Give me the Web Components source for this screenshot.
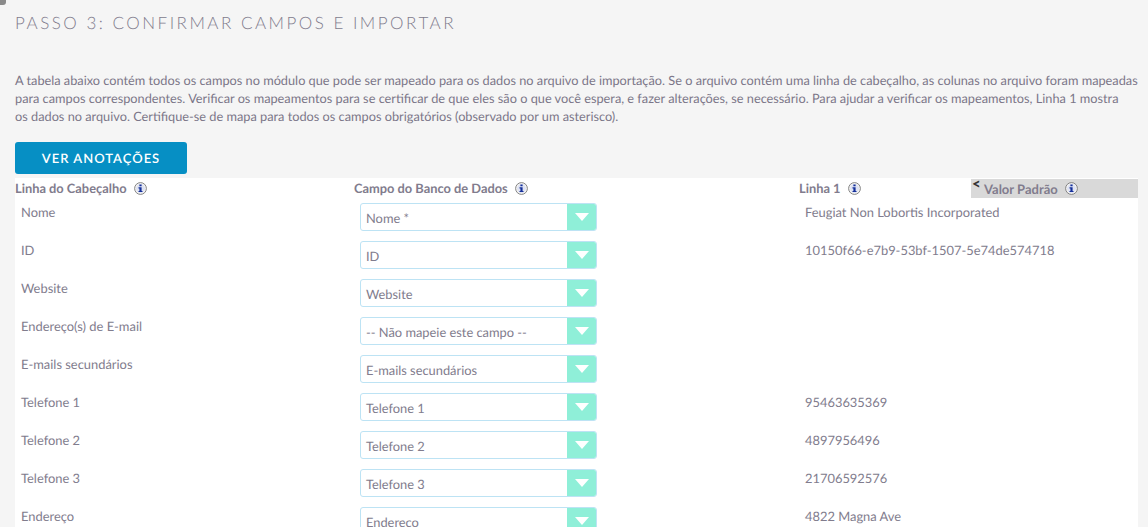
<!DOCTYPE html>
<html lang="pt">
<head>
<meta charset="utf-8">
<title>Passo 3</title>
<style>
  html, body { margin: 0; height: 527px; overflow: hidden; background: #f5f5f5; }
  body { font-family: Lato, sans-serif; color: #817c8d; text-rendering: geometricPrecision; }
</style>
</head>
<body>
<import-step>
  <span slot="title">Passo 3: Confirmar campos e importar</span>
  A tabela abaixo contém todos os campos no módulo que pode ser mapeado para os dados no arquivo de importação. Se o arquivo contém uma linha de cabeçalho, as colunas no arquivo foram mapeadas para campos correspondentes. Verificar os mapeamentos para se certificar de que eles são o que você espera, e fazer alterações, se necessário. Para ajudar a verificar os mapeamentos, Linha 1 mostra<br>os dados no arquivo. Certifique-se de mapa para todos os campos obrigatórios (observado por um asterisco).
  <map-table slot="table">
    <map-row label="Nome" field="Nome *" value="Feugiat Non Lobortis Incorporated"></map-row>
    <map-row label="ID" field="ID" value="10150f66-e7b9-53bf-1507-5e74de574718"></map-row>
    <map-row label="Website" field="Website"></map-row>
    <map-row label="Endereço(s) de E-mail" field="-- Não mapeie este campo --"></map-row>
    <map-row label="E-mails secundários" field="E-mails secundários"></map-row>
    <map-row label="Telefone 1" field="Telefone 1" value="95463635369"></map-row>
    <map-row label="Telefone 2" field="Telefone 2" value="4897956496"></map-row>
    <map-row label="Telefone 3" field="Telefone 3" value="21706592576"></map-row>
    <map-row label="Endereço" field="Endereco" value="4822 Magna Ave"></map-row>
  </map-table>
</import-step>

<script>
const INFO_ICON = `<svg width="13" height="13" viewBox="0 0 13 13" aria-hidden="true">
  <circle cx="6.5" cy="6.5" r="5.9" fill="#f4f4f4" stroke="#777" stroke-width=".9"/>
  <circle cx="6.5" cy="6.5" r="4.4" fill="#dfe3f3"/>
  <path d="M5.4 2.6h2.2v1.7H5.4zM4.5 5.3h3.1v3.6h.9v1.2h-4V8.9h.9V6.5h-.9z" fill="#15309a"/>
</svg>`;

class InfoIcon extends HTMLElement {
  constructor() {
    super();
    this.attachShadow({ mode: "open" }).innerHTML = `
      <style>
        :host { display: inline-flex; width: 13px; height: 13px; }
      </style>
      ${INFO_ICON}`;
  }
}

class ImportStep extends HTMLElement {
  constructor() {
    super();
    this.attachShadow({ mode: "open" }).innerHTML = `
      <style>
        :host { display: block; position: relative; padding: 0 0 0 15px; }
        .corner {
          position: absolute; left: -3px; top: -3px; width: 9px; height: 8px;
          background: #8a8a8a; border-radius: 0 0 3px 0;
        }
        h2 {
          margin: 0; padding-top: 13px; height: 25px; line-height: 20px;
          font-size: 17px; font-weight: 300; letter-spacing: 2.5px;
          text-transform: uppercase; color: #817c8d; white-space: nowrap;
        }
        p {
          margin: 33px 0 0; font-size: 12.76px; line-height: 18px;
          width: 1130px; color: #7b7688;
        }
        button {
          display: block; margin: 17px 0 4px; width: 172px; height: 32px; padding: 0;
          border: 0; border-radius: 3px; background: #068fc4; color: #fff;
          font: 600 13px Lato, sans-serif; letter-spacing: 1px; text-transform: uppercase;
          text-rendering: geometricPrecision;
        }
      </style>
      <div class="corner"></div>
      <h2><slot name="title"></slot></h2>
      <p><slot></slot></p>
      <button type="button">Ver anotações</button>
      <slot name="table"></slot>`;
  }
}

class MapTable extends HTMLElement {
  constructor() {
    super();
    this.attachShadow({ mode: "open" }).innerHTML = `
      <style>
        :host { display: block; width: 1123px; background: #fff; font-size: 12.9px; }
        .head {
          display: grid; grid-template-columns: 339px 445px 172px 1fr;
          height: 20px; align-items: center; font-weight: 700; font-size: 12.85px; color: #817c8d;
        }
        .head span { display: flex; align-items: center; gap: 7px; white-space: nowrap; }
        .default {
          height: 19px; margin-top: 1px; background: #d9d9d9; position: relative;
          padding-left: 13px; font-size: 13px;
        }
        .default i {
          position: absolute; left: 1px; top: -2px; font-style: normal; font-weight: 900;
          font-size: 15px; line-height: 14px; color: #333;
        }
      </style>
      <div class="head">
        <span>Linha do Cabeçalho <info-icon></info-icon></span>
        <span>Campo do Banco de Dados <info-icon></info-icon></span>
        <span>Linha 1 <info-icon></info-icon></span>
        <span class="default"><i>&lt;</i>Valor Padrão <info-icon></info-icon></span>
      </div>
      <slot></slot>`;
  }
}

class MapRow extends HTMLElement {
  constructor() {
    super();
    this.attachShadow({ mode: "open" }).innerHTML = `
      <style>
        :host {
          display: grid; grid-template-columns: 345px 445px 1fr;
          height: 38px; color: #817c8d;
        }
        .label { padding: 5px 0 0 6px; line-height: 18px; }
        .value { padding: 5px 0 0 0; line-height: 18px; }
        .select {
          box-sizing: border-box; width: 237px; height: 28px; margin-top: 5px;
          border: 1px solid #bde3f4; border-radius: 3px; background: #fff;
          display: flex; align-items: center; justify-content: space-between;
          overflow: hidden; font-size: 12.85px;
        }
        .text { padding: 1px 0 0 5px; white-space: nowrap; }
        .arrow {
          flex: none; width: 29px; height: 100%; background: #8fefd8;
          display: flex; align-items: center; justify-content: center;
        }
        .arrow svg { display: block; }
      </style>
      <div class="label"></div>
      <div><div class="select">
        <span class="text"></span>
        <span class="arrow"><svg width="14" height="8" viewBox="0 0 14 8"><path d="M0 0h14L7 8z" fill="#fff"/></svg></span>
      </div></div>
      <div class="value"></div>`;
  }
  connectedCallback() {
    const root = this.shadowRoot;
    root.querySelector(".label").textContent = this.getAttribute("label");
    root.querySelector(".text").textContent = this.getAttribute("field");
    root.querySelector(".value").textContent = this.getAttribute("value") || "";
  }
}

customElements.define("info-icon", InfoIcon);
customElements.define("import-step", ImportStep);
customElements.define("map-table", MapTable);
customElements.define("map-row", MapRow);
</script>
</body>
</html>
